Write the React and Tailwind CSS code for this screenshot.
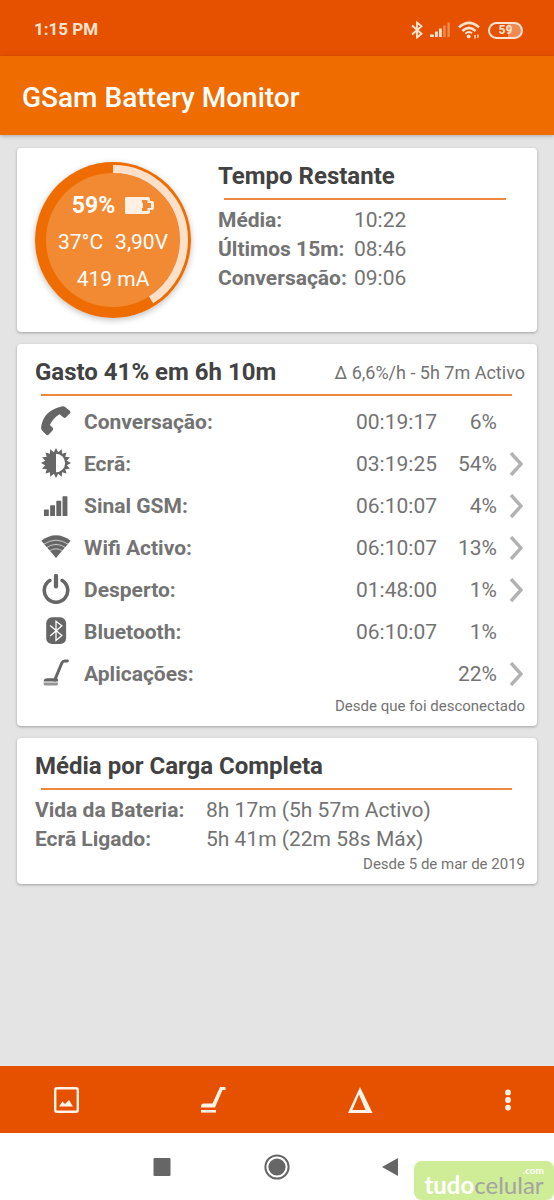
import { MoreVertical } from 'lucide-react'

const REMAINING = [
  { label: 'Média:', value: '10:22' },
  { label: 'Últimos 15m:', value: '08:46' },
  { label: 'Conversação:', value: '09:06' },
]

const USAGE = [
  { label: 'Conversação:', icon: PhoneIcon, time: '00:19:17', percent: '6%' },
  { label: 'Ecrã:', icon: ScreenIcon, time: '03:19:25', percent: '54%', more: true },
  { label: 'Sinal GSM:', icon: SignalIcon, time: '06:10:07', percent: '4%', more: true },
  { label: 'Wifi Activo:', icon: WifiIcon, time: '06:10:07', percent: '13%', more: true },
  { label: 'Desperto:', icon: PowerIcon, time: '01:48:00', percent: '1%', more: true },
  { label: 'Bluetooth:', icon: BluetoothIcon, time: '06:10:07', percent: '1%' },
  { label: 'Aplicações:', icon: VacuumIcon, time: '', percent: '22%', more: true },
]

const AVERAGES = [
  { label: 'Vida da Bateria:', value: '8h 17m (5h 57m Activo)' },
  { label: 'Ecrã Ligado:', value: '5h 41m (22m 58s Máx)' },
]

// 16 pointed teeth around the sun
const SUN_POINTS = [...Array(32)].map((_, i) => {
  const r = i % 2 ? 34 : 46
  const a = (i * Math.PI) / 16 - Math.PI / 2
  return `${(46 + r * Math.cos(a)).toFixed(1)},${(46 + r * Math.sin(a)).toFixed(1)}`
}).join(' ')

function PhoneIcon() {
  return (
    <svg viewBox="0 0 92 92" className="size-[30px]" fill="currentColor" aria-hidden="true">
      <path d="M58 3C65 0 71 0 75 4L89 15Q92 19 89 22L76 35Q72 38 69 35L57 25C44 33 34 43 27 58L36 67Q39 70 36 74L23 88Q20 91 16 88L4 76C0 72 0 66 1 60C4 46 10 33 20 23C31 12 44 7 58 3Z" />
    </svg>
  )
}

function ScreenIcon() {
  return (
    <svg viewBox="0 0 92 92" className="size-[30px]" aria-hidden="true">
      <polygon points={SUN_POINTS} fill="currentColor" />
      <path d="M46 18A28 28 0 0 1 46 74Z" fill="#fff" />
    </svg>
  )
}

function SignalIcon() {
  return (
    <svg viewBox="0 0 92 92" className="size-[30px]" fill="currentColor" aria-hidden="true">
      <rect x="9" y="60" width="15" height="20" rx="2" />
      <rect x="28" y="47" width="15" height="33" rx="2" />
      <rect x="47" y="33" width="15" height="47" rx="2" />
      <rect x="66" y="19" width="15" height="61" rx="2" />
    </svg>
  )
}

function WifiIcon() {
  return (
    <svg viewBox="0 0 92 92" className="size-[30px]" aria-hidden="true">
      <path d="M46 80L1 27Q46 -7 91 27Z" fill="currentColor" />
      <g fill="none" stroke="#fff" strokeWidth="2">
        <path d="M6 39Q46 11 86 39" />
        <path d="M15 49Q46 27 77 49" />
        <path d="M24 59Q46 44 68 59" />
      </g>
    </svg>
  )
}

function PowerIcon() {
  return (
    <svg viewBox="0 0 92 92" className="size-[30px]" fill="none" stroke="currentColor" strokeWidth="11" strokeLinecap="round" aria-hidden="true">
      <path d="M27 20A36 36 0 1 0 65 20" />
      <path d="M46 6V38" strokeWidth="13" />
    </svg>
  )
}

function BluetoothIcon() {
  return (
    <svg viewBox="0 0 92 92" className="size-[30px]" fill="none" aria-hidden="true">
      <rect x="16" y="4" width="61" height="82" rx="18" fill="currentColor" />
      <path d="M28 29L64 60L46 75V16L64 30L28 61" stroke="#fff" strokeWidth="4" />
    </svg>
  )
}

function VacuumIcon() {
  return (
    <svg viewBox="0 0 92 92" className="size-[30px]" aria-hidden="true">
      <path d="M81 9H73Q67 9 64 15L42 68" fill="none" stroke="currentColor" strokeWidth="9" strokeLinecap="round" />
      <path d="M8 72Q9 62 19 62H48Q54 63 52 72Z" fill="currentColor" />
      <path d="M8 75H52V80Q52 84 48 84H12Q8 84 8 80Z" fill="currentColor" opacity="0.7" />
    </svg>
  )
}

function StatusIcons() {
  return (
    <div className="flex items-center text-[#fbe3d2]">
      <svg viewBox="0 0 12 18" className="h-[18px] w-3" fill="none" stroke="currentColor" strokeWidth="1.9" aria-hidden="true">
        <path d="M1 4.5L10.5 12.7L6 16.5V1.5L10.5 5.3L1 13.5" />
      </svg>
      <svg viewBox="0 0 21 16" className="ml-[7px] h-4 w-[21px]" fill="currentColor" aria-hidden="true">
        <rect x="0" y="12.5" width="3.8" height="2.5" />
        <rect x="5" y="9.5" width="2.8" height="5.5" />
        <rect x="9" y="6.5" width="2.8" height="8.5" />
        <rect x="13.2" y="3.5" width="2.4" height="11.5" opacity="0.4" />
        <rect x="17.4" y="0.5" width="2.4" height="14.5" opacity="0.4" />
      </svg>
      <svg viewBox="0 0 22 18" className="ml-[7px] h-[18px] w-[22px]" fill="none" stroke="currentColor" strokeWidth="2.6" aria-hidden="true">
        <path d="M1 6.4Q11 -2.8 21 6.4" />
        <path d="M4.4 10Q11 3.6 17.6 10" />
        <path d="M7.4 12.8Q11 9.4 14 12.4" strokeWidth="2" />
        <circle cx="10.7" cy="15.4" r="1.9" fill="currentColor" stroke="none" />
        <path d="M17 14V17.4M20 13.4V16.8" strokeWidth="1.4" />
      </svg>
      <span className="ml-2 flex h-[17px] w-[35px] items-center justify-center rounded-full border-2 border-current bg-[linear-gradient(90deg,transparent_58%,#f08a55_58%)] text-[12px] font-bold leading-none">
        59
      </span>
    </div>
  )
}

function Gauge() {
  return (
    <div className="relative size-[156px] shrink-0 rounded-full text-white shadow-[0_2px_6px_rgba(0,0,0,0.25)]">
      <svg viewBox="0 0 156 156" className="absolute inset-0 size-full" aria-hidden="true">
        <circle cx="78" cy="78" r="78" fill="#ef6c00" />
        <circle cx="78" cy="78" r="67" fill="#f28a33" />
        <circle cx="78" cy="78" r="71" fill="none" stroke="#fce0ca" strokeWidth="8" pathLength="100" strokeDasharray="41 59" transform="rotate(-90 78 78)" />
      </svg>
      <div className="relative flex flex-col items-center pt-[25px] text-[21px] leading-[37px]">
        <div className="flex items-center gap-2.5 text-[23px] font-bold">
          59%
          <svg viewBox="0 0 29 17" className="h-[17px] w-[29px]" aria-hidden="true">
            <path d="M0 1Q0 0 1 0H23Q25 0 25 2V4H27Q29 4 29 6V11Q29 13 27 13H25V15Q25 17 23 17H1Q0 17 0 16Z" fill="#fff0e3" />
            <path d="M17 3H22.5V6H26V11H22.5V14H17V11H18V6H17Z" fill="#f28a33" />
          </svg>
        </div>
        <div className="flex gap-3">
          <span>37°C</span>
          <span>3,90V</span>
        </div>
        <div>419 mA</div>
      </div>
    </div>
  )
}

function Card({ className, children }) {
  return (
    <section className={`rounded bg-white shadow-[0_1px_3px_rgba(0,0,0,0.3)] ${className}`}>
      {children}
    </section>
  )
}

function MoreLink({ label }) {
  return (
    <a href="#" aria-label={label} className="block text-[#b2b2b2]">
      <svg viewBox="0 0 14 26" className="h-[26px] w-3.5" fill="none" stroke="currentColor" strokeWidth="3.4" aria-hidden="true">
        <path d="M2 1L12 12L2 23" />
      </svg>
    </a>
  )
}

export default function App() {
  return (
    <div className="flex min-h-screen flex-col bg-[#e4e4e4] font-[Roboto,sans-serif] text-[#737373]">
      {/* Status bar */}
      <div className="flex h-14 items-center justify-between bg-[#e65100] pl-[34px] pr-[31px] pt-1">
        <span className="text-[17px] font-bold text-[#fbe3d2]">1:15 PM</span>
        <StatusIcons />
      </div>

      {/* App bar */}
      <header className="z-10 flex h-[79px] items-center bg-[#ef6c00] px-[22px] pt-1 shadow-[0_1px_4px_rgba(0,0,0,0.25)]">
        <h1 className="text-[28px] font-medium text-white">GSam Battery Monitor</h1>
      </header>

      <main className="flex flex-1 flex-col gap-3 px-[17px] pb-4 pt-[13px]">
        {/* Time left */}
        <Card className="flex gap-[27px] px-[18px] py-3.5">
          <Gauge />
          <div className="flex-1 pb-5">
            <h2 className="text-[24px] font-bold leading-7 text-[#424242]">Tempo Restante</h2>
            <div className="ml-1.5 mr-[13px] mt-2 h-0.5 bg-[#ee8740]" />
            <dl className="mt-1.5 grid grid-cols-[136px_1fr] text-[21px] leading-[29px]">
              {REMAINING.map(r => (
                <div key={r.label} className="contents">
                  <dt className="whitespace-nowrap font-bold">{r.label}</dt>
                  <dd>{r.value}</dd>
                </div>
              ))}
            </dl>
          </div>
        </Card>

        {/* Usage since unplugged */}
        <Card className="pb-2.5 pl-[18px] pr-3 pt-3.5">
          <div className="flex items-center justify-between">
            <h2 className="text-[24px] font-bold leading-7 text-[#424242]">Gasto 41% em 6h 10m</h2>
            <span className="text-[18px]">Δ 6,6%/h - 5h 7m Activo</span>
          </div>
          <div className="ml-1.5 mr-[13px] mt-2 h-0.5 bg-[#ee8740]" />
          <table className="mt-1.5 w-full text-[21px]">
            <tbody>
              {USAGE.map(row => (
                <tr key={row.label} className="h-[42px]">
                  <td className="w-[49px] p-0 pb-1 pl-1.5 text-[#666]"><row.icon /></td>
                  <th scope="row" className="p-0 text-left font-bold">{row.label}</th>
                  <td className="p-0 text-right">{row.time}</td>
                  <td className="w-[60px] p-0 text-right">{row.percent}</td>
                  <td className="w-7 p-0 pl-3">{row.more && <MoreLink label={row.label} />}</td>
                </tr>
              ))}
            </tbody>
          </table>
          <p className="text-right text-[15px] leading-5">Desde que foi desconectado</p>
        </Card>

        {/* Full charge averages */}
        <Card className="pb-2.5 pl-[18px] pr-3 pt-3.5">
          <h2 className="text-[24px] font-bold leading-7 text-[#424242]">Média por Carga Completa</h2>
          <div className="ml-1.5 mr-[13px] mt-2 h-0.5 bg-[#ee8740]" />
          <dl className="mt-1.5 grid grid-cols-[171px_1fr] text-[21px] leading-[29px]">
            {AVERAGES.map(a => (
              <div key={a.label} className="contents">
                <dt className="whitespace-nowrap font-bold">{a.label}</dt>
                <dd>{a.value}</dd>
              </div>
            ))}
          </dl>
          <p className="text-right text-[15px] leading-5">Desde 5 de mar de 2019</p>
        </Card>
      </main>

      {/* Toolbar */}
      <div className="flex h-[67px] items-center justify-between bg-[#e65100] pl-[53px] pr-[33px] text-[#fff3ea]">
        <button aria-label="Gráficos">
          <svg viewBox="0 0 26 28" className="h-7 w-[26px]" aria-hidden="true">
            <rect x="2.2" y="2.2" width="22.6" height="23.6" rx="1.8" fill="none" stroke="currentColor" strokeWidth="2.4" />
            <path d="M6 20.5L9.5 15.5L12 18L16 14L20 20.5Z" fill="currentColor" />
          </svg>
        </button>
        <button aria-label="Aplicações">
          <svg viewBox="0 0 26 28" className="h-7 w-[26px]" fill="currentColor" aria-hidden="true">
            <path d="M20 1H25.5V4H22.5L15 21.5H1V20Q1 17.5 4 17.5H12.5Z" />
            <rect x="1" y="24" width="15" height="2.6" />
          </svg>
        </button>
        <button aria-label="Delta">
          <svg viewBox="0 0 26 28" className="h-7 w-[26px]" aria-hidden="true">
            <path fillRule="evenodd" d="M12 1L24.5 27H0ZM11 8.5L4.5 24H17.5Z" fill="currentColor" />
          </svg>
        </button>
        <button aria-label="Mais opções" className="flex w-[26px] justify-center">
          <MoreVertical size={28} fill="currentColor" strokeWidth={3.4} />
        </button>
      </div>

      {/* System navigation */}
      <nav className="relative grid h-[67px] grid-cols-[1fr_auto_1fr] items-center bg-white text-[#666]">
        <button aria-label="Recentes" className="mr-[93px] justify-self-end">
          <svg viewBox="0 0 18 18" className="size-[18px]" aria-hidden="true"><rect x="0.5" width="17" height="18" rx="1" fill="currentColor" /></svg>
        </button>
        <button aria-label="Início">
          <svg viewBox="0 0 26 26" className="size-[26px]" aria-hidden="true">
            <circle cx="13" cy="13" r="11.6" fill="none" stroke="currentColor" strokeWidth="2" />
            <circle cx="13" cy="13" r="8.6" fill="currentColor" />
          </svg>
        </button>
        <button aria-label="Voltar" className="ml-[92px] justify-self-start">
          <svg viewBox="0 0 16 20" className="h-5 w-4" aria-hidden="true"><path d="M0 10L16 1V19Z" fill="currentColor" /></svg>
        </button>
        <div className="absolute bottom-0 right-0 flex h-[39px] w-[140px] flex-col rounded-lg bg-[#cfec97] px-2.5 pt-1 font-[Lato,sans-serif]">
          <span className="self-end text-[10px] font-bold leading-[10px] text-white">.com</span>
          <div className="text-center text-[24px] leading-[20px]">
            <span className="font-bold text-white">tudo</span>
            <span className="text-[#a3a3a3]">celular</span>
          </div>
        </div>
      </nav>
    </div>
  )
}
